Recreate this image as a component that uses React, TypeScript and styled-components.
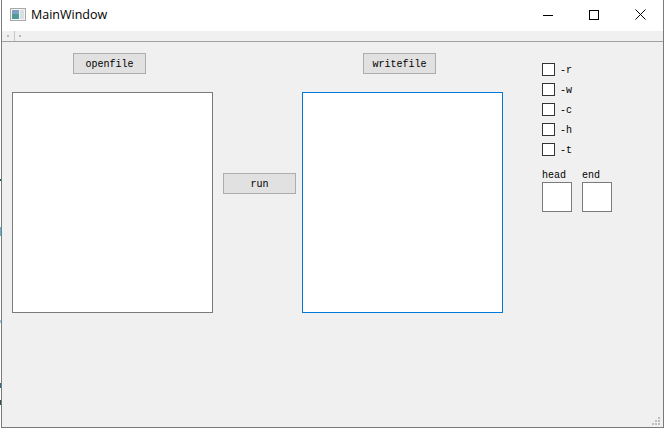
import React from "react";
import styled, { createGlobalStyle } from "styled-components";

const GlobalStyle = createGlobalStyle`
    html, body {
        margin: 0;
        padding: 0;
        background: #ffffff;
        overflow: hidden;
    }
`;

const Desktop = styled.div`
    width: 664px;
    height: 428px;
    padding-left: 1px;
    box-sizing: border-box;
    position: relative;
    overflow: hidden;
    background: #ffffff;
`;

const DesktopBit = styled.span<{ $top: number; $height: number; $color: string }>`
    position: absolute;
    left: 0;
    width: 1px;
    top: ${({ $top }) => $top}px;
    height: ${({ $height }) => $height}px;
    background: ${({ $color }) => $color};
`;

const Window = styled.div`
    width: 663px;
    height: 428px;
    box-sizing: border-box;
    border-left: 1px solid #7a7a7a;
    border-right: 1px solid #7a7a7a;
    border-bottom: 1px solid #7a7a7a;
    display: flex;
    flex-direction: column;
    background: #f0f0f0;
    position: relative;
`;

const TitleBar = styled.div`
    height: 31px;
    flex: none;
    box-sizing: border-box;
    padding: 0 0 2px 8px;
    background: #ffffff;
    display: flex;
    align-items: center;
    font-family: "Open Sans", "Noto Sans", sans-serif;
    font-size: 12.5px;
    color: #000000;
`;

const TitleText = styled.span`
    margin-left: 5px;
    flex: 1;
`;

const WindowButton = styled.div`
    width: 46px;
    height: 29px;
    display: flex;
    align-items: center;
    justify-content: center;
`;

const ToolBar = styled.div`
    height: 10px;
    flex: none;
    background: #f0f0f0;
    border-bottom: 1px solid #a0a0a0;
    display: flex;
    align-items: center;
    padding-left: 5px;
`;

const Handle = styled.span`
    width: 2px;
    height: 2px;
    background: #b8b8b8;
`;

const ToolSeparator = styled.span`
    width: 1px;
    height: 10px;
    background: #c8c8c8;
    margin: 0 4px 0 5px;
`;

const Central = styled.div`
    flex: 1;
    display: flex;
    padding: 11px 0 0 10px;
    font-family: "Liberation Mono", monospace;
    font-size: 10px;
    color: #000000;
`;

const EditorColumn = styled.div`
    width: 201px;
    display: flex;
    flex-direction: column;
    align-items: flex-start;
`;

const PushButton = styled.button`
    width: 73px;
    height: 21px;
    padding: 1px 0 0;
    box-sizing: border-box;
    border: 1px solid #adadad;
    background: #e1e1e1;
    font: inherit;
    color: inherit;
`;

const TopButton = styled(PushButton)`
    margin: 0 0 18px 61px;
`;

const RunButton = styled(PushButton)`
    margin: 120px 6px 0 10px;
`;

const TextEdit = styled.div<{ $focused?: boolean }>`
    width: 201px;
    height: 221px;
    box-sizing: border-box;
    background: #ffffff;
    border: 1px solid ${({ $focused }) => ($focused ? "#0078d7" : "#7a7a7a")};
`;

const OptionsColumn = styled.div`
    margin: 6px 0 0 39px;
    display: flex;
    flex-direction: column;
`;

const CheckRow = styled.div`
    height: 20px;
    display: flex;
    align-items: center;
    gap: 5px;
`;

const CheckBox = styled.span`
    width: 13px;
    height: 13px;
    box-sizing: border-box;
    border: 1px solid #333333;
    background: #ffffff;
`;

const CheckLabel = styled.span`
    padding-top: 2px;
`;

const FieldRow = styled.div`
    display: flex;
    gap: 10px;
    margin-top: 11px;
`;

const Field = styled.div`
    display: flex;
    flex-direction: column;
`;

const FieldLabel = styled.span`
    height: 12px;
    line-height: 12px;
`;

const SmallEdit = styled.div`
    width: 30px;
    height: 30px;
    box-sizing: border-box;
    background: #ffffff;
    border: 1px solid #7a7a7a;
`;

const SizeGrip = styled.svg`
    position: absolute;
    right: 3px;
    bottom: 2px;
`;

const AppIcon = () => (
    <svg width="16" height="16" viewBox="0 0 16 16">
        <rect x="0.5" y="1.5" width="15" height="12" fill="#f4f4f4" stroke="#a8a8a8" />
        <rect x="2" y="3" width="7" height="9" fill="#4f9a94" />
        <rect x="2" y="3" width="7" height="4" fill="#7f9fc0" />
        <rect x="10" y="3" width="4" height="9" fill="#d4e2e4" />
    </svg>
);

const MinimizeIcon = () => (
    <svg width="10" height="10" viewBox="0 0 10 10">
        <path d="M0 5.5H10" stroke="#000" strokeWidth="1" />
    </svg>
);

const MaximizeIcon = () => (
    <svg width="10" height="10" viewBox="0 0 10 10">
        <rect x="0.5" y="0.5" width="9" height="9" fill="none" stroke="#000" />
    </svg>
);

const CloseIcon = () => (
    <svg width="11" height="11" viewBox="0 0 11 11">
        <path d="M0.5 0.5L10.5 10.5M10.5 0.5L0.5 10.5" stroke="#000" strokeWidth="1" />
    </svg>
);

const gripDots = [
    [6, 0],
    [3, 3],
    [6, 3],
    [0, 6],
    [3, 6],
    [6, 6]
];

const desktopBits = [
    { top: 179, height: 2, color: "#1c5a68" },
    { top: 227, height: 9, color: "#5fb4d8" },
    { top: 320, height: 3, color: "#8fcbe0" },
    { top: 383, height: 5, color: "#2a6f8f" },
    { top: 400, height: 5, color: "#38505a" }
];

const options = ["-r", "-w", "-c", "-h", "-t"];

const App: React.FC = () => {
    return (
        <Desktop>
            <GlobalStyle />
            {desktopBits.map((bit) => (
                <DesktopBit key={bit.top} $top={bit.top} $height={bit.height} $color={bit.color} />
            ))}
            <Window>
                <TitleBar>
                    <AppIcon />
                    <TitleText>MainWindow</TitleText>
                    <WindowButton>
                        <MinimizeIcon />
                    </WindowButton>
                    <WindowButton>
                        <MaximizeIcon />
                    </WindowButton>
                    <WindowButton>
                        <CloseIcon />
                    </WindowButton>
                </TitleBar>
                <ToolBar>
                    <Handle />
                    <ToolSeparator />
                    <Handle />
                </ToolBar>
                <Central>
                    <EditorColumn>
                        <TopButton>openfile</TopButton>
                        <TextEdit />
                    </EditorColumn>
                    <div>
                        <RunButton>run</RunButton>
                    </div>
                    <EditorColumn>
                        <TopButton>writefile</TopButton>
                        <TextEdit $focused />
                    </EditorColumn>
                    <OptionsColumn>
                        {options.map((option) => (
                            <CheckRow key={option}>
                                <CheckBox />
                                <CheckLabel>{option}</CheckLabel>
                            </CheckRow>
                        ))}
                        <FieldRow>
                            <Field>
                                <FieldLabel>head</FieldLabel>
                                <SmallEdit />
                            </Field>
                            <Field>
                                <FieldLabel>end</FieldLabel>
                                <SmallEdit />
                            </Field>
                        </FieldRow>
                    </OptionsColumn>
                </Central>
                <SizeGrip width="8" height="8" viewBox="0 0 8 8">
                    {gripDots.map(([x, y]) => (
                        <rect key={`${x}-${y}`} x={x} y={y} width="2" height="2" fill="#bdbdbd" />
                    ))}
                </SizeGrip>
            </Window>
        </Desktop>
    );
};

export default App;
